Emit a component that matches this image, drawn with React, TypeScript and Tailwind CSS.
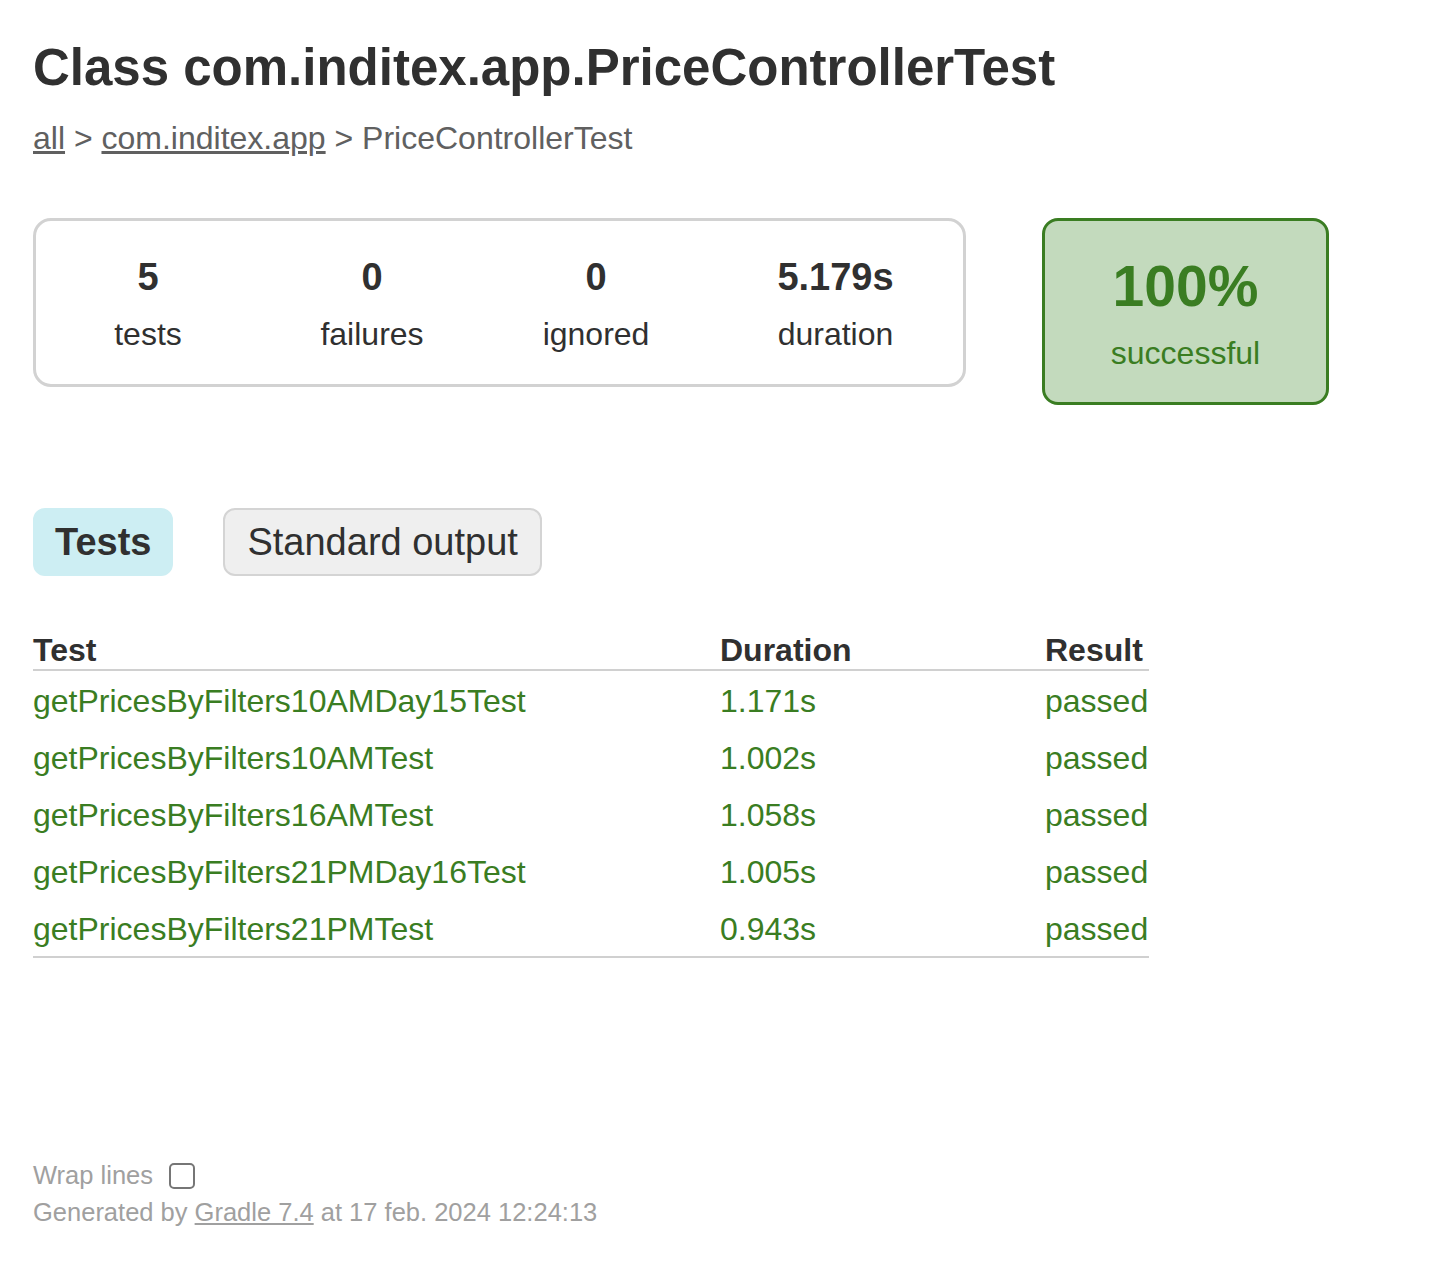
const tests = [
  { name: "getPricesByFilters10AMDay15Test", duration: "1.171s" },
  { name: "getPricesByFilters10AMTest", duration: "1.002s" },
  { name: "getPricesByFilters16AMTest", duration: "1.058s" },
  { name: "getPricesByFilters21PMDay16Test", duration: "1.005s" },
  { name: "getPricesByFilters21PMTest", duration: "0.943s" },
];

const stats = [
  { value: "5", label: "tests", width: "w-[224px]" },
  { value: "0", label: "failures", width: "w-[224px]" },
  { value: "0", label: "ignored", width: "w-[224px]" },
  { value: "5.179s", label: "duration", width: "flex-1" },
];

export default function App() {
  return (
    <div className="min-h-screen bg-white px-[33px] pt-[38px] font-['Liberation_Sans',Arial,sans-serif] text-[32px] leading-[36px] text-[#303030]">
      <h1 className="text-[51px] font-bold leading-[59px]">
        Class com.inditex.app.PriceControllerTest
      </h1>

      <div className="mt-[23px] text-[#606060]">
        <a className="underline">all</a> &gt; <a className="underline">com.inditex.app</a> &gt;
        PriceControllerTest
      </div>

      {/* summary */}
      <div className="mt-[62px] flex items-start">
        <div className="flex h-[169px] w-[933px] rounded-[18px] border-[3px] border-[#d2d2d2] pt-[35px]">
          {stats.map((s) => (
            <div key={s.label} className={`${s.width} flex flex-col items-center`}>
              <p className="text-[38px] font-bold leading-[42px]">{s.value}</p>
              <p className="mt-[18px]">{s.label}</p>
            </div>
          ))}
        </div>

        <div className="ml-[76px] flex h-[187px] w-[287px] flex-col items-center rounded-[16px] border-[3px] border-[#3a7d22] bg-[#c3dabd] pt-[33px] text-[#3a7d22]">
          <p className="text-[57px] font-bold leading-[64px]">100%</p>
          <p className="mt-[17px]">successful</p>
        </div>
      </div>

      {/* tabs */}
      <ul className="mt-[103px] flex gap-[50px]">
        <li className="rounded-[12px] border-2 border-[#cdeef3] bg-[#cdeef3] px-[20px] py-[11px] text-[38px] font-bold leading-[42px]">
          Tests
        </li>
        <li className="rounded-[12px] border-2 border-[#d4d4d4] bg-[#efefef] px-[22px] py-[11px] text-[38px] leading-[42px]">
          Standard output
        </li>
      </ul>

      {/* tests table */}
      <div className="mt-[56px] w-[1116px]">
        <div className="grid grid-cols-[687px_325px_1fr] border-b-2 border-[#d0d0d0] pb-[1px] font-bold">
          <div>Test</div>
          <div>Duration</div>
          <div>Result</div>
        </div>
        <div className="border-b-2 border-[#d0d0d0] text-[#3a7d22]">
          {tests.map((t) => (
            <div key={t.name} className="grid grid-cols-[687px_325px_1fr] pb-[9px] pt-[12px]">
              <div>{t.name}</div>
              <div>{t.duration}</div>
              <div>passed</div>
            </div>
          ))}
        </div>
      </div>

      {/* footer */}
      <div className="mt-[199px] pb-[40px] text-[25.5px] leading-[37px] text-[#a0a0a0]">
        <div className="flex items-center gap-[16px]">
          <span>Wrap lines</span>
          <span className="inline-block h-[26px] w-[26px] rounded-[5px] border-2 border-[#767676] bg-white" />
        </div>
        <div>
          Generated by <a className="underline">Gradle 7.4</a> at 17 feb. 2024 12:24:13
        </div>
      </div>
    </div>
  );
}
